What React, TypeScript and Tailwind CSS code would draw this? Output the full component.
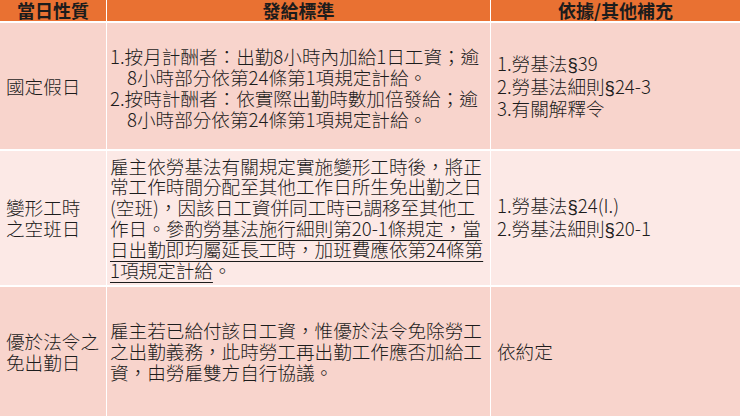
import React from "react";

const odd = "bg-[#f8d4cc]";
const even = "bg-[#fce9e6]";

const Cell: React.FC<{ className?: string; children: React.ReactNode }> = ({
  className = "",
  children,
}) => (
  <div className={`flex flex-col justify-center whitespace-nowrap ${className}`}>
    {children}
  </div>
);

const Head: React.FC<{ children: React.ReactNode }> = ({ children }) => (
  <div className="bg-[#e97132] flex items-center justify-center font-bold text-[18px] leading-[21px] font-['Noto_Sans_CJK_TC',sans-serif]">
    {children}
  </div>
);

const U: React.FC<{ children: React.ReactNode }> = ({ children }) => (
  <span className="underline decoration-1 underline-offset-[4px]">{children}</span>
);

// section sign drawn tighter, as in the slide
const S = () => <span className="font-['Liberation_Sans',sans-serif]">§</span>;

export default function App() {
  return (
    <div
      lang="zh-TW"
      className="w-[740px] h-[416px] overflow-hidden bg-white grid grid-cols-[106px_383px_1fr] grid-rows-[21px_126px_134px_1fr] gap-x-px gap-y-[2px] text-[18.6px] leading-[20.8px] text-[#1c1c1c] font-light font-['Noto_Sans_CJK_TC_Light','Noto_Sans_CJK_TC',sans-serif]"
    >
      <Head>當日性質</Head>
      <Head>發給標準</Head>
      <Head>依據/其他補充</Head>

      {/* 國定假日 */}
      <Cell className={`${odd} pl-[6px]`}>國定假日</Cell>
      <Cell className={`${odd} pl-[3px] pt-[4px]`}>
        <div>1.按月計酬者：出勤8小時內加給1日工資；逾</div>
        <div className="pl-[17px]">8小時部分依第24條第1項規定計給。</div>
        <div>2.按時計酬者：依實際出勤時數加倍發給；逾</div>
        <div className="pl-[17px]">8小時部分依第24條第1項規定計給。</div>
      </Cell>
      <Cell className={`${odd} pl-[6px]`}>
        <div>1.勞基法<S />39</div>
        <div>2.勞基法細則<S />24-3</div>
        <div>3.有關解釋令</div>
      </Cell>

      {/* 變形工時之空班日 */}
      <Cell className={`${even} pl-[6px]`}>
        <div>變形工時</div>
        <div>之空班日</div>
      </Cell>
      <Cell className={`${even} pl-[3px]`}>
        <div>雇主依勞基法有關規定實施變形工時後，將正</div>
        <div>常工作時間分配至其他工作日所生免出勤之日</div>
        <div>(空班)，因該日工資併同工時已調移至其他工</div>
        <div>
          作日。<U>參酌勞基法施行細則第20-1條規定，當</U>
        </div>
        <div>
          <U>日出勤即均屬延長工時，加班費應依第24條第</U>
        </div>
        <div>
          <U>1項規定計給</U>。
        </div>
      </Cell>
      <Cell className={`${even} pl-[6px]`}>
        <div>1.勞基法<S />24(I.)</div>
        <div>2.勞基法細則<S />20-1</div>
      </Cell>

      {/* 優於法令之免出勤日 */}
      <Cell className={`${odd} pl-[6px]`}>
        <div>優於法令之</div>
        <div>免出勤日</div>
      </Cell>
      <Cell className={`${odd} pl-[3px]`}>
        <div>雇主若已給付該日工資，惟優於法令免除勞工</div>
        <div>之出勤義務，此時勞工再出勤工作應否加給工</div>
        <div>資，由勞雇雙方自行協議。</div>
      </Cell>
      <Cell className={`${odd} pl-[6px]`}>依約定</Cell>
    </div>
  );
}
